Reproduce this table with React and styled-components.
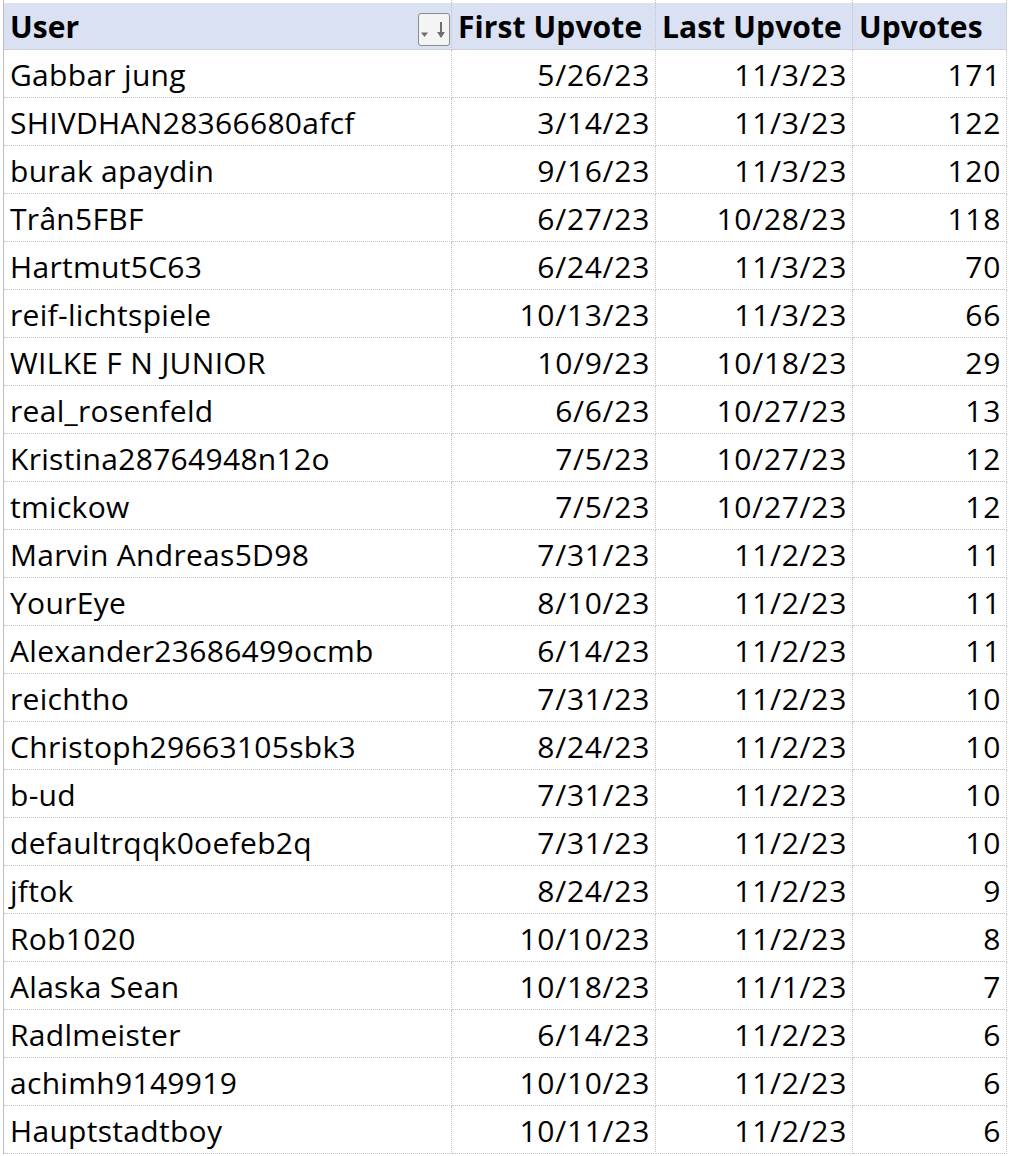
import React from "react";
import styled, { createGlobalStyle } from "styled-components";

const Global = createGlobalStyle`
  html, body { margin: 0; padding: 0; background: #ffffff; }
  body { font-family: "Open Sans", Lato, sans-serif; color: #000; }
`;

const rows = [
  ["Gabbar jung", "5/26/23", "11/3/23", 171],
  ["SHIVDHAN28366680afcf", "3/14/23", "11/3/23", 122],
  ["burak apaydin", "9/16/23", "11/3/23", 120],
  ["Trân5FBF", "6/27/23", "10/28/23", 118],
  ["Hartmut5C63", "6/24/23", "11/3/23", 70],
  ["reif-lichtspiele", "10/13/23", "11/3/23", 66],
  ["WILKE F N JUNIOR", "10/9/23", "10/18/23", 29],
  ["real_rosenfeld", "6/6/23", "10/27/23", 13],
  ["Kristina28764948n12o", "7/5/23", "10/27/23", 12],
  ["tmickow", "7/5/23", "10/27/23", 12],
  ["Marvin Andreas5D98", "7/31/23", "11/2/23", 11],
  ["YourEye", "8/10/23", "11/2/23", 11],
  ["Alexander23686499ocmb", "6/14/23", "11/2/23", 11],
  ["reichtho", "7/31/23", "11/2/23", 10],
  ["Christoph29663105sbk3", "8/24/23", "11/2/23", 10],
  ["b-ud", "7/31/23", "11/2/23", 10],
  ["defaultrqqk0oefeb2q", "7/31/23", "11/2/23", 10],
  ["jftok", "8/24/23", "11/2/23", 9],
  ["Rob1020", "10/10/23", "11/2/23", 8],
  ["Alaska Sean", "10/18/23", "11/1/23", 7],
  ["Radlmeister", "6/14/23", "11/2/23", 6],
  ["achimh9149919", "10/10/23", "11/2/23", 6],
  ["Hauptstadtboy", "10/11/23", "11/2/23", 6],
];

const Sheet = styled.div`
  width: 1004px;
  margin-left: 3px;
  border-left: 1px solid #bdbdbd;
  display: grid;
  grid-template-columns: 448px 204px 197px 154px;
`;

const Cell = styled.div`
  box-sizing: border-box;
  height: ${(p) => (p.$top ? "3px" : p.$head ? "47px" : "48px")};
  border-right: 1px dotted #c4c4c4;
  border-bottom: ${(p) => (p.$top ? "none" : "1px dotted #c4c4c4")};
  background: ${(p) => (p.$head ? "#d9e1f2" : "#ffffff")};
  display: flex;
  align-items: center;
  justify-content: ${(p) => (p.$right ? "flex-end" : "flex-start")};
  padding: ${(p) =>
    p.$head ? "0 0 0 6px" : p.$right ? "2px 5px 0 0" : "2px 0 0 6px"};
  font-size: 30px;
  font-weight: ${(p) => (p.$head ? 700 : 400)};
  letter-spacing: ${(p) => (p.$head ? "0.1px" : p.$right ? "0.7px" : "0.3px")};
  white-space: nowrap;
  overflow: hidden;
  position: relative;
`;

const FilterButton = styled.div`
  position: absolute;
  right: 1px;
  top: 10px;
  width: 32px;
  height: 33px;
  box-sizing: border-box;
  border: 1.5px solid #8c8c8c;
  border-radius: 3px;
  background: #f4f4f4;
  display: flex;
  align-items: center;
  justify-content: center;
`;

const FilterIcon = () => (
  <svg width="30" height="30" viewBox="0 0 30 30">
    <polygon points="2,17.5 9,17.5 5.5,22" fill="#6e6e6e" />
    <line x1="22" y1="7" x2="22" y2="22" stroke="#6e6e6e" strokeWidth="2" />
    <polygon points="18,17 26,17 22,23" fill="#6e6e6e" />
  </svg>
);

export default function App() {
  return (
    <>
      <Global />
      <Sheet>
        <Cell $top />
        <Cell $top />
        <Cell $top />
        <Cell $top />
        <Cell $head>
          User
          <FilterButton>
            <FilterIcon />
          </FilterButton>
        </Cell>
        <Cell $head>First Upvote</Cell>
        <Cell $head>Last Upvote</Cell>
        <Cell $head>Upvotes</Cell>
        {rows.map((r, i) => (
          <React.Fragment key={i}>
            <Cell>{r[0]}</Cell>
            <Cell $right>{r[1]}</Cell>
            <Cell $right>{r[2]}</Cell>
            <Cell $right>{r[3]}</Cell>
          </React.Fragment>
        ))}
      </Sheet>
    </>
  );
}
